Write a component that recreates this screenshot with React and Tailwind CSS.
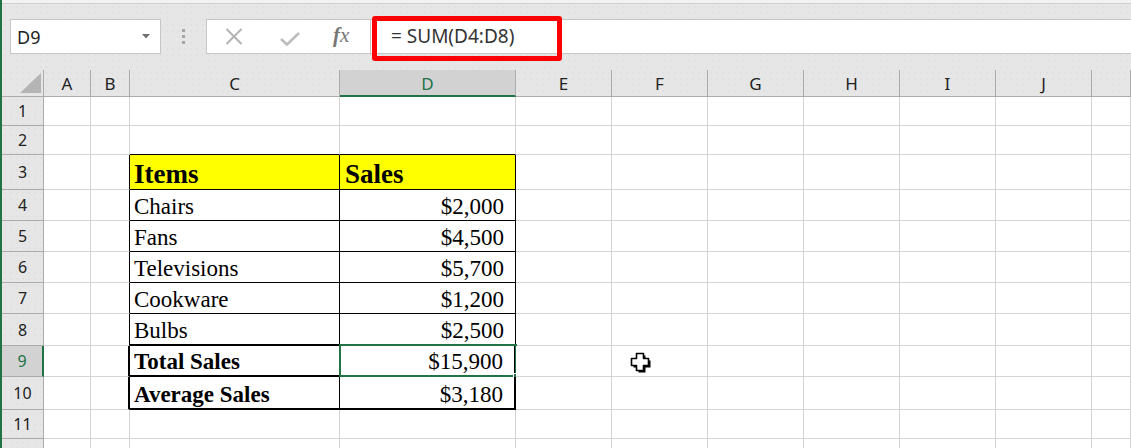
import React from "react";

const COLS = ["A", "B", "C", "D", "E", "F", "G", "H", "I", "J", ""];

const ROWS = [
  { n: 1, h: "h-[29px]" },
  { n: 2, h: "h-[29px]" },
  { n: 3, h: "h-[35px]", c: "Items", d: "Sales", head: true },
  { n: 4, h: "h-[31px]", c: "Chairs", d: "$2,000" },
  { n: 5, h: "h-[31px]", c: "Fans", d: "$4,500" },
  { n: 6, h: "h-[31px]", c: "Televisions", d: "$5,700" },
  { n: 7, h: "h-[31px]", c: "Cookware", d: "$1,200" },
  { n: 8, h: "h-[32px]", c: "Bulbs", d: "$2,500" },
  { n: 9, h: "h-[31px]", c: "Total Sales", d: "$15,900", bold: true },
  { n: 10, h: "h-[33px]", c: "Average Sales", d: "$3,180", bold: true },
  { n: 11, h: "h-[29px]" },
  { n: 12, h: "h-[29px]", hide: true },
];

const GRID =
  "grid grid-cols-[42px_47px_39px_210px_176px_96px_96px_96px_96px_96px_96px_39px]";

const R_GRAY = "border-r border-r-[#d4d4d4]";
const R_BLACK = "border-r border-r-black";
const R_THICK = "border-r-2 border-r-black";
const B_GRAY = "border-b border-b-[#d4d4d4]";
const B_BLACK = "border-b border-b-black";
const B_THICK = "border-b-2 border-b-black";

const DOTS =
  "bg-[#e6e6e6] bg-[radial-gradient(circle,#dadada_0.6px,transparent_0.8px)] bg-[length:6px_6px]";

function rightBorder(n, ci) {
  if (ci === 1 || ci === 2 || ci === 3) {
    if (n >= 3 && n <= 8) return R_BLACK;
    if (n === 9 || n === 10) {
      if (ci === 2) return R_BLACK;
      return R_THICK;
    }
  }
  return R_GRAY;
}

function bottomBorder(n, ci) {
  if (ci === 2 || ci === 3) {
    if (n >= 2 && n <= 7) return B_BLACK;
    if (n >= 8 && n <= 10) return B_THICK;
  }
  return B_GRAY;
}

function Cursor() {
  return (
    <svg
      className="absolute left-[626px] top-[350px]"
      width="26"
      height="26"
      viewBox="0 0 26 26"
    >
      <path
        d="M8.5 3.5 H15.5 V8.5 H20.5 V15.5 H15.5 V20.5 H8.5 V15.5 H3.5 V8.5 H8.5 Z"
        fill="#000"
        transform="translate(2 2)"
      />
      <path
        d="M8.5 3.5 H15.5 V8.5 H20.5 V15.5 H15.5 V20.5 H8.5 V15.5 H3.5 V8.5 H8.5 Z"
        fill="#fff"
        stroke="#000"
        strokeWidth="1.6"
        strokeLinejoin="round"
      />
    </svg>
  );
}

function FormulaBar() {
  return (
    <div className={`h-[66px] flex items-start pt-[15px] ${DOTS}`}>
      <div className="ml-[8px] w-[151px] h-[35px] bg-white border border-[#c6c6c6] flex items-center justify-between pl-[6px] pr-[10px]">
        <span className="font-['Noto_Sans'] text-[18px] text-[#222] leading-none">
          D9
        </span>
        <svg width="8" height="5" viewBox="0 0 8 5">
          <path d="M0 0 H8 L4 4.5 Z" fill="#707070" />
        </svg>
      </div>
      <div className="w-[45px] h-[35px] flex flex-col items-center justify-center gap-[3px]">
        <div className="w-[3px] h-[3px] bg-[#a6a6a6]" />
        <div className="w-[3px] h-[3px] bg-[#a6a6a6]" />
        <div className="w-[3px] h-[3px] bg-[#a6a6a6]" />
      </div>
      <div className="relative flex-1 h-[35px] bg-white border-y border-l border-[#c6c6c6] flex items-center">
        <div className="w-[164px] h-full flex items-center border-r border-[#c6c6c6]">
          <svg className="ml-[18px]" width="18" height="17" viewBox="0 0 18 17">
            <path
              d="M1.5 1 L16.5 16 M16.5 1 L1.5 16"
              stroke="#b2b2b2"
              strokeWidth="2"
            />
          </svg>
          <svg className="ml-[37px] mt-[4px]" width="20" height="14" viewBox="0 0 20 14">
            <path
              d="M1 7 L7 12.5 L19 1"
              stroke="#bdbdbd"
              strokeWidth="2.6"
              fill="none"
            />
          </svg>
          <span className="ml-[33px] font-['Liberation_Serif'] italic text-[#777] text-[21px] leading-none -mt-[2px]">
            <span className="font-bold">f</span>x
          </span>
        </div>
        <div className="pl-[20px] font-['Noto_Sans'] text-[19px] text-[#333] leading-none">
          = SUM(D4:D8)
        </div>
        <div className="absolute left-[165px] -top-[4px] w-[190px] h-[45px] border-[5px] border-[#ff0000] rounded-[3px]" />
      </div>
    </div>
  );
}

function HeaderRow() {
  return (
    <div className={`${GRID} h-[27px]`}>
      <div className={`${DOTS} border-r border-b border-[#ababab] relative`}>
        <svg className="absolute left-[18px] top-[3px]" width="22" height="20" viewBox="0 0 22 20">
          <path d="M21 0 V20 H0 Z" fill="#b4b4b4" />
        </svg>
      </div>
      {COLS.map((c, i) =>
        c === "D" ? (
          <div
            key={i}
            className="bg-[#d2d2d2] border-r border-r-[#ababab] border-b-2 border-b-[#217346] flex items-end justify-center pb-[1px] font-['Noto_Sans'] text-[17px] leading-none text-[#217346]"
          >
            <span className="pb-[2px]">{c}</span>
          </div>
        ) : (
          <div
            key={i}
            className={`${DOTS} border-r border-r-[#ababab] border-b border-b-[#ababab] flex items-end justify-center pb-[4px] font-['Noto_Sans'] text-[17px] leading-none text-[#222]`}
          >
            {c}
          </div>
        )
      )}
    </div>
  );
}

function DataRow({ row }) {
  const { n, h, c, d, head, bold, hide } = row;
  const sel = n === 9;
  return (
    <div className={`${GRID} ${h}`}>
      <div
        className={
          sel
            ? "bg-[#d2d2d2] border-r-2 border-r-[#217346] border-b border-b-[#ababab] flex items-center justify-center font-['Noto_Sans'] text-[16px] leading-none text-[#217346]"
            : `${DOTS} border-r border-r-[#ababab] border-b border-b-[#ababab] flex items-center justify-center font-['Noto_Sans'] text-[16px] leading-none text-[#222]`
        }
      >
        {hide ? "" : n}
      </div>
      {COLS.map((col, ci) => {
        const cls = `${rightBorder(n, ci)} ${bottomBorder(n, ci)} relative`;
        if (ci === 2 && c) {
          return (
            <div
              key={ci}
              className={`${cls} ${head ? "bg-[#ffff00]" : "bg-white"} flex items-end pl-[4px] font-['Liberation_Serif'] text-black whitespace-nowrap ${
                head
                  ? "text-[27px] font-bold leading-none pb-[1px]"
                  : bold
                  ? "text-[23px] font-bold leading-none pb-[2px]"
                  : "text-[23px] leading-none pb-[2px]"
              }`}
            >
              {c}
            </div>
          );
        }
        if (ci === 3 && d) {
          return (
            <div
              key={ci}
              className={`${cls} ${head ? "bg-[#ffff00]" : "bg-white"} flex items-end font-['Liberation_Serif'] text-black whitespace-nowrap ${
                head
                  ? "justify-start pl-[5px] text-[27px] font-bold leading-none pb-[1px]"
                  : "justify-end pr-[11px] text-[23px] leading-none pb-[2px]"
              }`}
            >
              {d}
              {sel && (
                <div className="absolute -left-[1px] -top-[2px] w-[178px] h-[33px] border-2 border-[#217346]">
                  <div className="absolute -right-[5px] -bottom-[5px] w-[7px] h-[7px] bg-[#217346] border border-white" />
                </div>
              )}
            </div>
          );
        }
        return <div key={ci} className={`${cls} bg-white`} />;
      })}
    </div>
  );
}

export default function App() {
  return (
    <div className="relative w-[1131px] h-[448px] overflow-hidden bg-white border-l-2 border-l-[#217346]">
      <div className="h-[4px] bg-[#f3f3f3] border-b border-b-[#cfcfcf]" />
      <FormulaBar />
      <HeaderRow />
      {ROWS.map((r) => (
        <DataRow key={r.n} row={r} />
      ))}
      <Cursor />
    </div>
  );
}
